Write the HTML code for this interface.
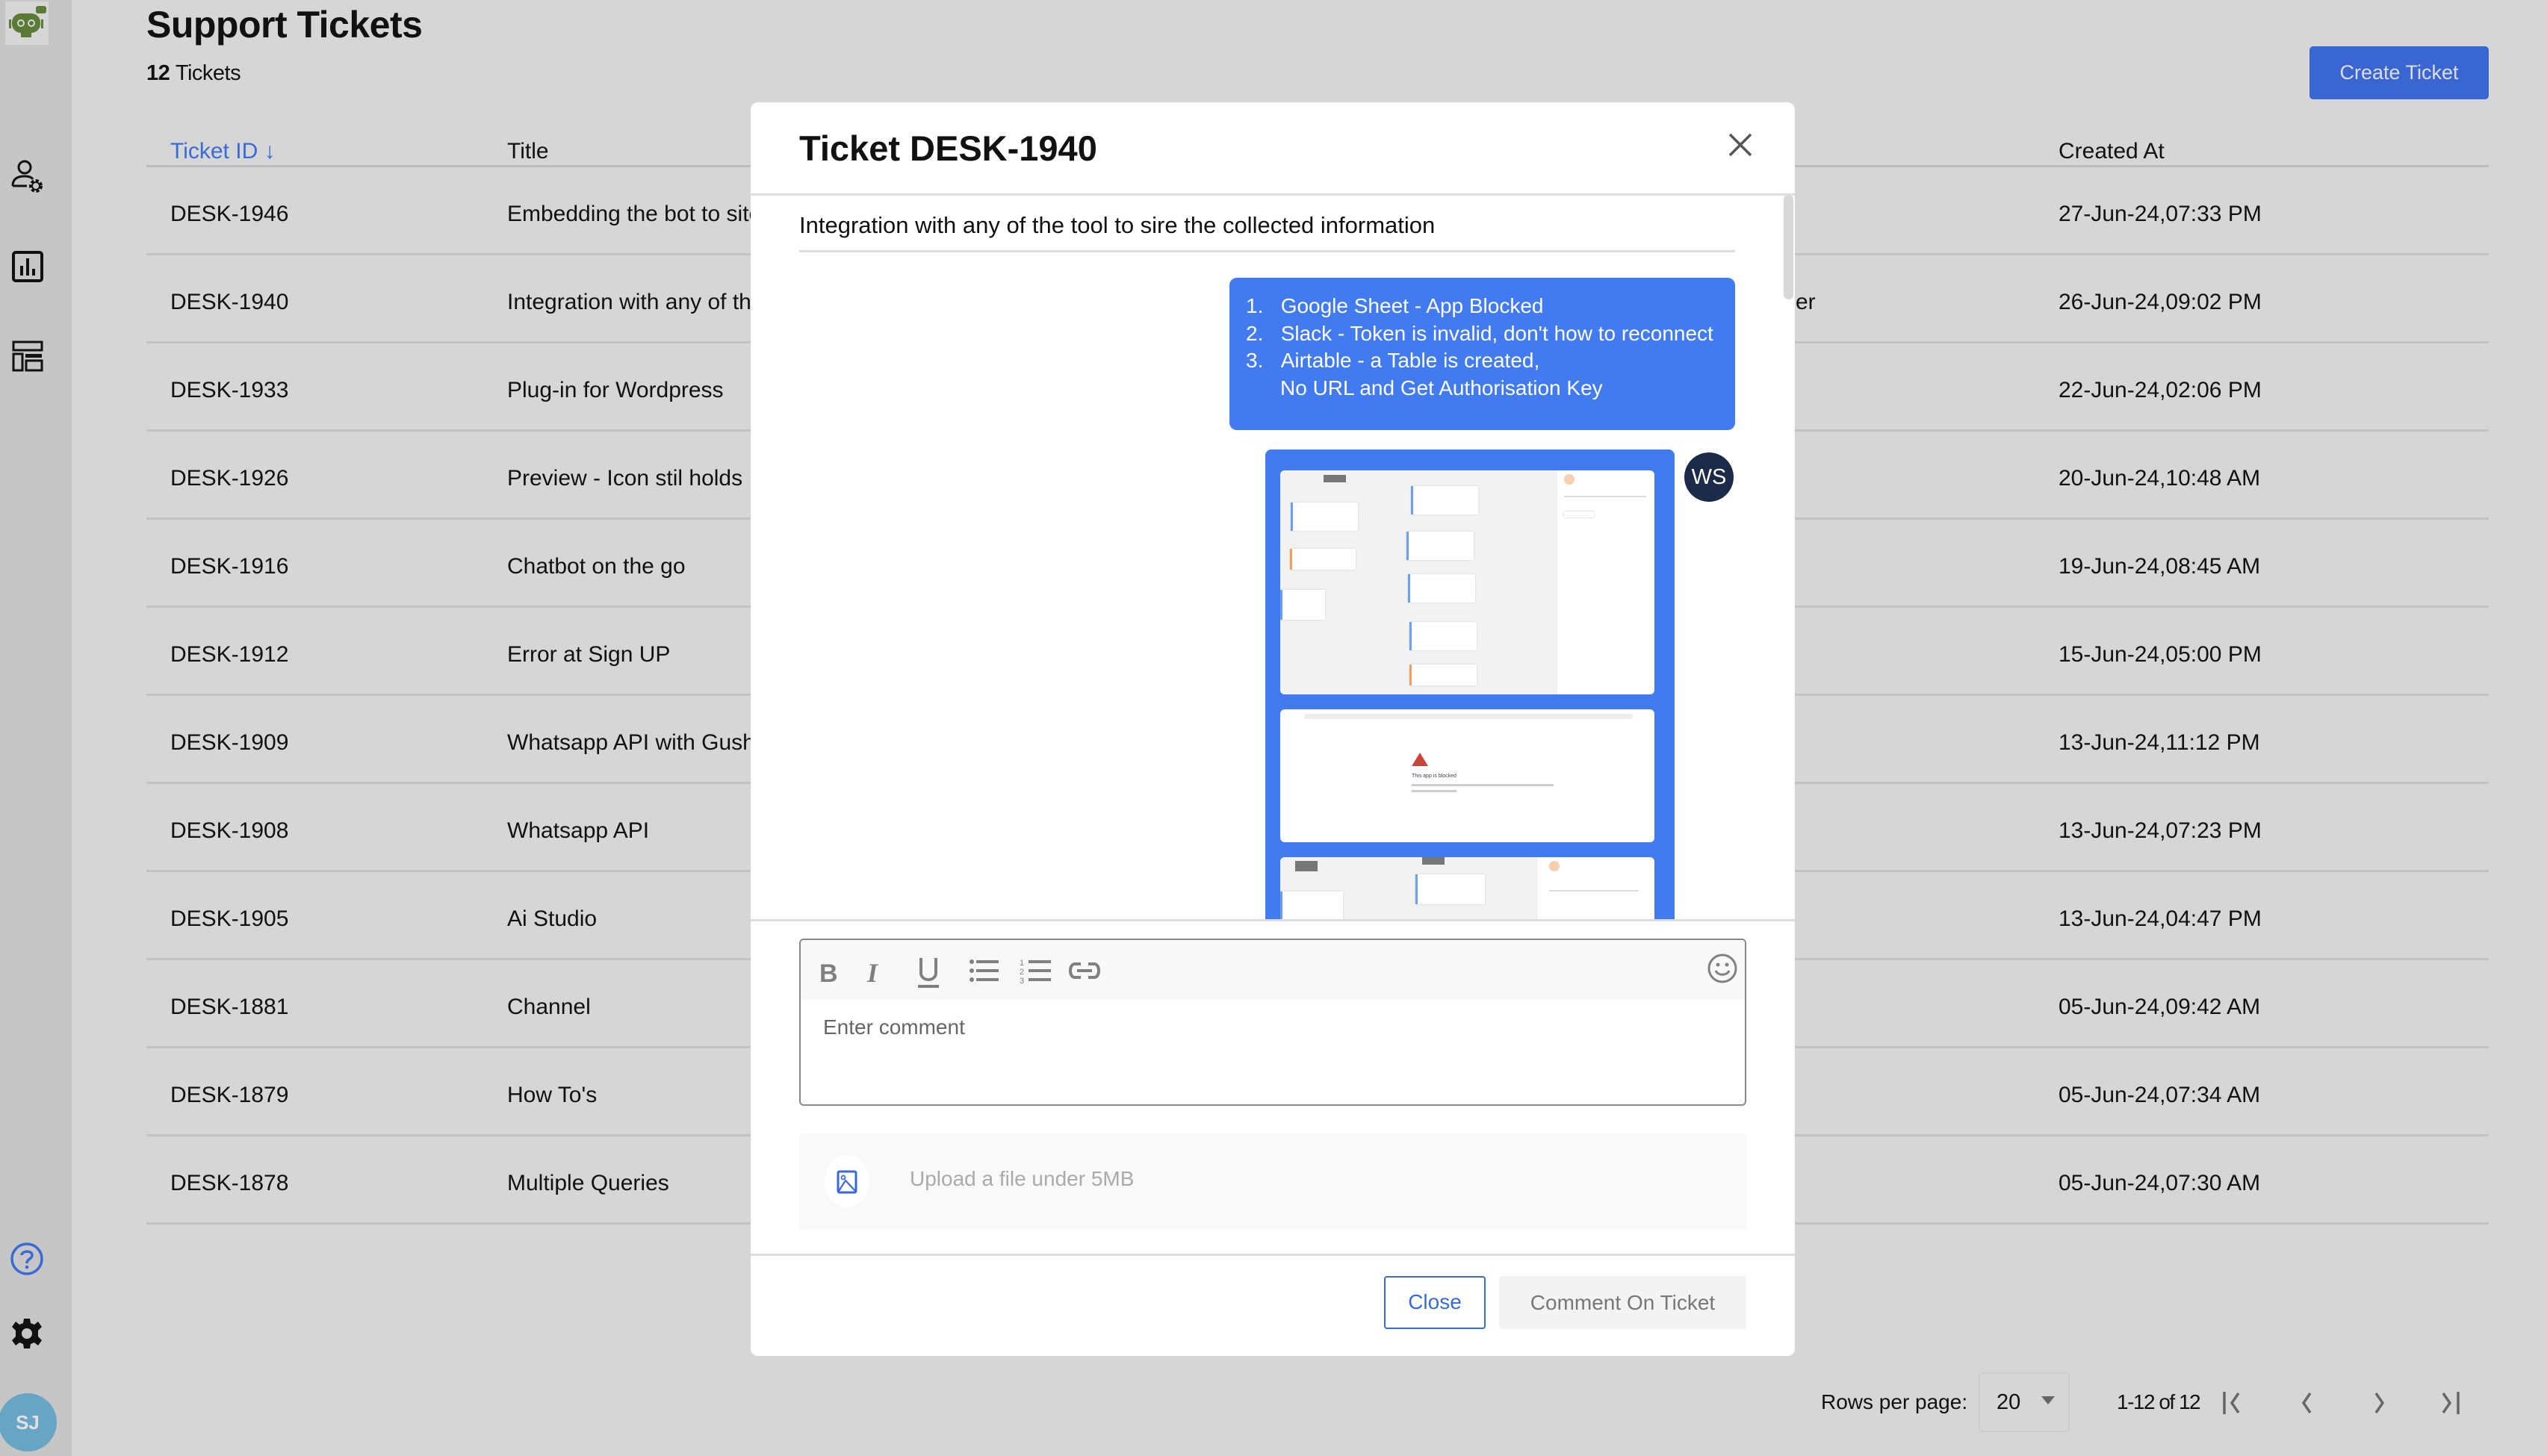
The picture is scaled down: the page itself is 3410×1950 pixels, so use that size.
<!DOCTYPE html>
<html><head><meta charset="utf-8"><style>
*{margin:0;padding:0;box-sizing:border-box}
body{width:3410px;height:1950px;background:#d6d6d6;font-family:"Liberation Sans",sans-serif;color:#111;position:relative;overflow:hidden}
.a{position:absolute;white-space:nowrap}
.side{left:0;top:0;width:96px;height:1950px;background:#c6c6c6}
.row{position:absolute;left:196px;width:3136px;height:118px;border-bottom:3px solid #c2c2c2;font-size:30px}
.row span{position:absolute;top:46px}
.modal{left:1005px;top:137px;width:1398px;height:1679px;background:#fff;border-radius:10px;overflow:hidden}
.card{position:absolute;background:#fff;border-left:3px solid #6aa0f0;box-shadow:0 0 2px #ccc}
</style></head><body>
<div class="a side">
 <div class="a" style="left:7px;top:2px;width:58px;height:58px;background:#d6d6d6"></div>
 <svg class="a" style="left:10px;top:6px" width="54" height="48" viewBox="0 0 54 48"><rect x="38" y="2" width="14" height="10" rx="3" fill="#5a7a35"/><rect x="6" y="12" width="38" height="26" rx="12" fill="#5a7a35"/><circle cx="18" cy="25" r="4" fill="none" stroke="#d6d6d6" stroke-width="2"/><circle cx="32" cy="25" r="4" fill="none" stroke="#d6d6d6" stroke-width="2"/><rect x="18" y="38" width="14" height="6" fill="#5a7a35"/><rect x="2" y="20" width="3" height="12" fill="#5a7a35"/><rect x="45" y="20" width="3" height="12" fill="#5a7a35"/></svg>
 <svg class="a" style="left:14px;top:213px" width="46" height="50" viewBox="0 0 46 50"><circle cx="19" cy="11" r="8" fill="none" stroke="#111" stroke-width="3"/><path d="M3 36 C3 26 10 23 19 23 C24 23 28 24 30 27 M3 36 H22" fill="none" stroke="#111" stroke-width="3"/><circle cx="34" cy="36" r="7" fill="none" stroke="#111" stroke-width="4" stroke-dasharray="4 2.5"/><circle cx="34" cy="36" r="5" fill="none" stroke="#111" stroke-width="2"/></svg>
 <svg class="a" style="left:16px;top:336px" width="44" height="44" viewBox="0 0 44 44"><rect x="2" y="2" width="38" height="38" rx="3" fill="none" stroke="#111" stroke-width="4"/><rect x="11" y="20" width="4" height="13" fill="#111"/><rect x="19" y="10" width="4" height="23" fill="#111"/><rect x="27" y="24" width="4" height="9" fill="#111"/></svg>
 <svg class="a" style="left:16px;top:456px" width="44" height="44" viewBox="0 0 44 44"><rect x="2" y="2" width="38" height="11" fill="none" stroke="#111" stroke-width="3"/><rect x="2" y="18" width="12" height="22" fill="none" stroke="#111" stroke-width="3"/><rect x="18" y="18" width="22" height="5" fill="#111"/><rect x="19" y="27" width="21" height="13" fill="none" stroke="#111" stroke-width="3"/></svg>
 <svg class="a" style="left:13px;top:1663px" width="46" height="46" viewBox="0 0 46 46"><circle cx="23" cy="23" r="20" fill="none" stroke="#3a6ad6" stroke-width="3.5"/><path d="M16 18 C16 12 30 11 30 18 C30 23 23 23 23 29" fill="none" stroke="#3a6ad6" stroke-width="3.5"/><circle cx="23" cy="34" r="2.3" fill="#3a6ad6"/></svg>
 <svg class="a" style="left:15px;top:1765px" width="42" height="42" viewBox="0 0 42 42"><path d="M17 1H25L26 7 31 9 36 5 41 12 36 17 36 25 41 30 36 37 31 33 26 35 25 41H17L16 35 11 33 6 37 1 30 6 25 6 17 1 12 6 5 11 9 16 7Z" fill="#111"/><circle cx="21" cy="21" r="7" fill="#c6c6c6"/></svg>
 <div class="a" style="left:-2px;top:1866px;width:78px;height:78px;border-radius:50%;background:#68a5c4;color:#e0e0e0;font-weight:bold;font-size:26px;line-height:78px;text-align:center">SJ</div>
</div>

<div class="a" style="left:196px;top:4px;font-size:50px;font-weight:bold;letter-spacing:-0.5px">Support Tickets</div>
<div class="a" style="left:196px;top:82px;font-size:29px;font-weight:bold;letter-spacing:-0.5px">12 <span style="font-weight:normal">Tickets</span></div>
<div class="a" style="left:3092px;top:62px;width:240px;height:71px;background:#3966d0;border-radius:5px;color:#dcdcdc;font-size:27px;text-align:center;line-height:71px">Create Ticket</div>

<div class="a" style="left:196px;top:182px;width:3136px;height:42px;border-bottom:3px solid #bdbdbd;font-size:30px">
 <span class="a" style="left:32px;top:4px;color:#3a6ad6">Ticket ID ↓</span>
 <span class="a" style="left:483px;top:4px">Title</span>
 <span class="a" style="left:2560px;top:4px">Created At</span>
</div>
<div class="row" style="top:224px"><span style="left:32px">DESK-1946</span><span style="left:483px">Embedding the bot to site</span><span style="left:2560px">27-Jun-24,07:33 PM</span></div>
<div class="row" style="top:342px"><span style="left:32px">DESK-1940</span><span style="left:483px">Integration with any of the tool</span><span style="left:2208px">er</span><span style="left:2560px">26-Jun-24,09:02 PM</span></div>
<div class="row" style="top:460px"><span style="left:32px">DESK-1933</span><span style="left:483px">Plug-in for Wordpress</span><span style="left:2560px">22-Jun-24,02:06 PM</span></div>
<div class="row" style="top:578px"><span style="left:32px">DESK-1926</span><span style="left:483px">Preview - Icon stil holds</span><span style="left:2560px">20-Jun-24,10:48 AM</span></div>
<div class="row" style="top:696px"><span style="left:32px">DESK-1916</span><span style="left:483px">Chatbot on the go</span><span style="left:2560px">19-Jun-24,08:45 AM</span></div>
<div class="row" style="top:814px"><span style="left:32px">DESK-1912</span><span style="left:483px">Error at Sign UP</span><span style="left:2560px">15-Jun-24,05:00 PM</span></div>
<div class="row" style="top:932px"><span style="left:32px">DESK-1909</span><span style="left:483px">Whatsapp API with Gushup</span><span style="left:2560px">13-Jun-24,11:12 PM</span></div>
<div class="row" style="top:1050px"><span style="left:32px">DESK-1908</span><span style="left:483px">Whatsapp API</span><span style="left:2560px">13-Jun-24,07:23 PM</span></div>
<div class="row" style="top:1168px"><span style="left:32px">DESK-1905</span><span style="left:483px">Ai Studio</span><span style="left:2560px">13-Jun-24,04:47 PM</span></div>
<div class="row" style="top:1286px"><span style="left:32px">DESK-1881</span><span style="left:483px">Channel</span><span style="left:2560px">05-Jun-24,09:42 AM</span></div>
<div class="row" style="top:1404px"><span style="left:32px">DESK-1879</span><span style="left:483px">How To's</span><span style="left:2560px">05-Jun-24,07:34 AM</span></div>
<div class="row" style="top:1522px"><span style="left:32px">DESK-1878</span><span style="left:483px">Multiple Queries</span><span style="left:2560px">05-Jun-24,07:30 AM</span></div>

<div class="a" style="left:2438px;top:1862px;font-size:28px">Rows per page:</div>
<div class="a" style="left:2649px;top:1838px;width:122px;height:80px;border:2px solid #cdcdcd;border-radius:5px"></div>
<div class="a" style="left:2673px;top:1862px;font-size:29px">20</div>
<div class="a" style="left:2733px;top:1870px;width:0;height:0;border-left:9px solid transparent;border-right:9px solid transparent;border-top:11px solid #666"></div>
<div class="a" style="left:2834px;top:1862px;font-size:28px;letter-spacing:-1.5px">1-12 of 12</div>
<svg class="a" style="left:2975px;top:1862px" width="340" height="34" viewBox="0 0 340 34"><g fill="none" stroke="#666" stroke-width="3.5"><path d="M3 2V32M22 4L13 17L22 30"/><path d="M118 4L109 17L118 30"/><path d="M206 4L215 17L206 30"/><path d="M296 4L305 17L296 30M316 2V32"/></g></svg>

<div class="a modal">
 <div class="a" style="left:65px;top:34px;font-size:47px;font-weight:bold">Ticket DESK-1940</div>
 <svg class="a" style="left:1308px;top:40px" width="34" height="34" viewBox="0 0 34 34"><path d="M3 3L31 31M31 3L3 31" stroke="#555" stroke-width="3.5"/></svg>
 <div class="a" style="left:0;top:122px;width:1398px;height:3px;background:#ddd"></div>
 <div class="a" style="left:1383px;top:124px;width:13px;height:140px;border-radius:6px;background:#d8d8d8"></div>
 <div class="a" style="left:65px;top:147px;font-size:31px">Integration with any of the tool to sire the collected information</div>
 <div class="a" style="left:65px;top:198px;width:1253px;height:3px;background:#ddd"></div>
 <div class="a" style="left:641px;top:235px;width:677px;height:204px;background:#427bf0;border-radius:10px;color:#fff;font-size:28px;line-height:36.5px;padding:20px 0 0 22px;white-space:nowrap">
  <div>1.&nbsp;&nbsp;&nbsp;Google Sheet - App Blocked</div>
  <div>2.&nbsp;&nbsp;&nbsp;Slack - Token is invalid, don't how to reconnect</div>
  <div>3.&nbsp;&nbsp;&nbsp;Airtable - a Table is created,</div>
  <div style="padding-left:46px">No URL and Get Authorisation Key</div>
 </div>
 <div class="a" style="left:1250px;top:469px;width:66px;height:66px;border-radius:50%;background:#1c2a4a;color:#fff;font-size:29px;line-height:66px;text-align:center">WS</div>
 <div class="a" style="left:689px;top:465px;width:548px;height:632px;background:#427bf0;border-radius:8px 8px 0 0;overflow:hidden">
  <div class="a" style="left:20px;top:28px;width:501px;height:300px;background:#fff;border-radius:6px;overflow:hidden">
   <div class="a" style="left:0;top:0;width:371px;height:300px;background:#f2f2f2"></div>
   <div class="card" style="left:14px;top:43px;width:90px;height:38px"></div>
   <div class="card" style="left:13px;top:105px;width:88px;height:28px;border-color:#f0a060"></div>
   <div class="card" style="left:0;top:160px;width:60px;height:40px"></div>
   <div class="card" style="left:175px;top:21px;width:90px;height:38px"></div>
   <div class="card" style="left:169px;top:82px;width:90px;height:38px"></div>
   <div class="card" style="left:171px;top:139px;width:90px;height:38px"></div>
   <div class="card" style="left:173px;top:203px;width:90px;height:38px"></div>
   <div class="card" style="left:173px;top:260px;width:90px;height:28px;border-color:#f0a060"></div>
   <div class="a" style="left:58px;top:6px;width:30px;height:10px;background:#777"></div>
   <div class="a" style="left:380px;top:5px;width:14px;height:14px;border-radius:50%;background:#f8d0b0"></div>
   <div class="a" style="left:380px;top:34px;width:110px;height:2px;background:#ddd"></div>
   <div class="a" style="left:380px;top:55px;width:40px;height:8px;box-shadow:0 0 2px #bbb"></div>
  </div>
  <div class="a" style="left:20px;top:348px;width:501px;height:178px;background:#fff;border-radius:6px">
   <div class="a" style="left:32px;top:6px;width:440px;height:7px;background:#eee;border-radius:3px"></div>
   <svg class="a" style="left:176px;top:58px" width="22" height="18" viewBox="0 0 22 18"><path d="M11 0L22 18H0Z" fill="#c9463a"/></svg>
   <div class="a" style="left:176px;top:86px;font-size:7px;color:#444">This app is blocked</div>
   <div class="a" style="left:176px;top:100px;width:190px;height:3px;background:#ccc"></div>
   <div class="a" style="left:176px;top:108px;width:60px;height:3px;background:#ccc"></div>
  </div>
  <div class="a" style="left:20px;top:546px;width:501px;height:120px;background:#fff;border-radius:6px;overflow:hidden">
   <div class="a" style="left:0;top:0;width:345px;height:120px;background:#f2f2f2"></div>
   <div class="a" style="left:20px;top:5px;width:30px;height:14px;background:#777"></div>
   <div class="a" style="left:190px;top:0;width:30px;height:10px;background:#777"></div>
   <div class="card" style="left:0;top:46px;width:84px;height:40px"></div>
   <div class="card" style="left:181px;top:23px;width:93px;height:40px"></div>
   <div class="a" style="left:360px;top:5px;width:14px;height:14px;border-radius:50%;background:#f8d0b0"></div>
   <div class="a" style="left:360px;top:44px;width:120px;height:2px;background:#ddd"></div>
  </div>
 </div>
 <div class="a" style="left:0;top:1094px;width:1398px;height:3px;background:#ddd"></div>
 <div class="a" style="left:65px;top:1120px;width:1268px;height:224px;border:2.5px solid #888;border-radius:6px;overflow:hidden">
  <div class="a" style="left:0;top:0;width:1268px;height:80px;background:#f8f8f8"></div>
  <div class="a" style="left:30px;top:101px;font-size:28px;color:#666">Enter comment</div>
  <svg class="a" style="left:25px;top:20px" width="390" height="44" viewBox="0 0 390 44" fill="#808080">
   <text x="0" y="36" font-family="Liberation Sans" font-weight="bold" font-size="34">B</text>
   <text x="64" y="36" font-family="Liberation Serif" font-style="italic" font-weight="bold" font-size="36">I</text>
   <path d="M136 4V24C136 36 156 36 156 24V4" fill="none" stroke="#808080" stroke-width="4"/><rect x="132" y="40" width="28" height="4"/>
   <circle cx="204" cy="9" r="3"/><circle cx="204" cy="21" r="3"/><circle cx="204" cy="33" r="3"/><rect x="210" y="7" width="30" height="4"/><rect x="210" y="19" width="30" height="4"/><rect x="210" y="31" width="30" height="4"/>
   <text x="268" y="14" font-size="11" font-family="Liberation Sans">1</text><text x="268" y="26" font-size="11" font-family="Liberation Sans">2</text><text x="268" y="38" font-size="11" font-family="Liberation Sans">3</text><rect x="280" y="7" width="30" height="4"/><rect x="280" y="19" width="30" height="4"/><rect x="280" y="31" width="30" height="4"/>
   <path d="M350 12H342C334 12 334 30 342 30H350M360 12H368C376 12 376 30 368 30H360M345 21H365" fill="none" stroke="#808080" stroke-width="4"/>
  </svg>
  <svg class="a" style="left:1212px;top:16px" width="44" height="44" viewBox="0 0 44 44"><circle cx="22" cy="22" r="18" fill="none" stroke="#808080" stroke-width="3"/><circle cx="16" cy="17" r="2.5" fill="#808080"/><circle cx="28" cy="17" r="2.5" fill="#808080"/><path d="M13 25C16 32 28 32 31 25" fill="none" stroke="#808080" stroke-width="3"/></svg>
 </div>
 <div class="a" style="left:65px;top:1381px;width:1268px;height:128px;background:#f9f9f9">
  <div class="a" style="left:34px;top:29px;width:60px;height:70px;border-radius:50%;background:#fff"></div>
  <svg class="a" style="left:50px;top:49px" width="28" height="32" viewBox="0 0 28 32"><rect x="2" y="2" width="24" height="28" rx="2" fill="none" stroke="#3a6ad6" stroke-width="3"/><circle cx="9" cy="10" r="2.5" fill="none" stroke="#3a6ad6" stroke-width="1.8"/><path d="M3 28L12 14L25 28" fill="none" stroke="#3a6ad6" stroke-width="2.2"/></svg>
  <div class="a" style="left:148px;top:45px;font-size:28px;color:#aaa">Upload a file under 5MB</div>
 </div>
 <div class="a" style="left:0;top:1542px;width:1398px;height:3px;background:#ddd"></div>
 <div class="a" style="left:848px;top:1572px;width:136px;height:71px;border:2.5px solid #3a6ad6;border-radius:4px;color:#3a6ad6;font-size:28px;text-align:center;line-height:66px">Close</div>
 <div class="a" style="left:1002px;top:1572px;width:331px;height:71px;background:#f3f3f3;border-radius:4px;color:#777;font-size:28px;text-align:center;line-height:71px">Comment On Ticket</div>
</div>
</body></html>
